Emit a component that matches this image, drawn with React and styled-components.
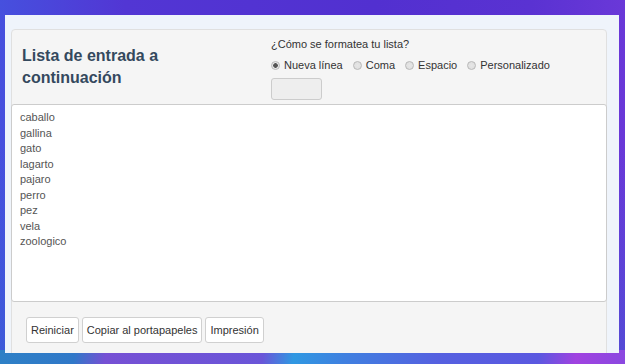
import React from "react";
import styled, { createGlobalStyle } from "styled-components";

const Global = createGlobalStyle`
  html, body { margin: 0; padding: 0; }
  body {
    width: 625px;
    height: 364px;
    overflow: hidden;
    font-family: "Liberation Sans", Arial, sans-serif;
    background:
      linear-gradient(100deg, #2e80c6 0%, #3078c8 12%, #7650d4 17%, #6a55d8 42%, #2f98e2 47%, #3f80e0 55%, #5560e0 70%, #5a58e0 86%, #a042e0 92%, #8a48e0 100%) bottom / 100% 14px no-repeat,
      linear-gradient(180deg, rgba(0,0,0,0) 40%, rgba(40,110,210,0.35) 100%),
      linear-gradient(90deg, #4650de 0%, #5236d4 20%, #5230d0 60%, #5a32d2 85%, #6a38d8 100%);
  }
`;

const Panel = styled.div`
  margin: 15px 0 0 5px;
  width: 614px;
  height: 338px;
  box-sizing: border-box;
  background: #eff4fb;
  padding: 14px 12px 0 6px;
  overflow: hidden;
`;

const Card = styled.div`
  background: #f5f5f5;
  border: 1px solid #e0e0e0;
  border-radius: 4px;
  height: 340px;
  box-sizing: border-box;
  display: flex;
  flex-direction: column;
`;

const Header = styled.div`
  display: flex;
  height: 74px;
  box-sizing: border-box;
  padding: 0 0 0 10px;
`;

const Title = styled.h2`
  margin: 0;
  width: 249px;
  flex: none;
  box-sizing: border-box;
  padding: 15px 40px 0 0;
  font-size: 16px;
  line-height: 22px;
  font-weight: bold;
  color: #34495e;
`;

const Options = styled.div`
  display: flex;
  flex-direction: column;
  padding-top: 7px;
  font-size: 11px;
  color: #333;
`;

const Question = styled.div`
  line-height: 14px;
`;

const RadioRow = styled.div`
  display: flex;
  align-items: center;
  margin-top: 7px;
  height: 14px;
`;

const RadioLabel = styled.label`
  display: flex;
  align-items: center;
  margin-right: 10px;
  color: #333;
`;

const Radio = styled.span`
  width: 9px;
  height: 9px;
  border-radius: 50%;
  box-sizing: border-box;
  border: 1px solid #b8b8b8;
  background: radial-gradient(circle, ${(p) => (p.$checked ? "#555 0, #555 2px, #e8e8e8 2.6px" : "#e6e6e6 0, #dcdcdc 100%")});
  margin-right: 4px;
`;

const CustomBox = styled.div`
  margin-top: 6px;
  width: 51px;
  height: 22px;
  box-sizing: border-box;
  background: #eeeeee;
  border: 1px solid #cccccc;
  border-radius: 3px;
`;

const ListArea = styled.textarea`
  display: block;
  margin: 0 0 0 -1px;
  width: calc(100% + 2px);
  height: 198px;
  box-sizing: border-box;
  resize: none;
  border: 1px solid #cccccc;
  border-radius: 3px;
  background: #fff;
  padding: 5px 8px;
  font-family: "Liberation Sans", Arial, sans-serif;
  font-size: 11px;
  line-height: 15.5px;
  color: #555;
  outline: none;
  overflow: hidden;
`;

const Footer = styled.div`
  display: flex;
  gap: 3px;
  padding: 15px 0 0 14px;
`;

const Button = styled.button`
  height: 26px;
  padding: 0 4px;
  background: #fff;
  border: 1px solid #d0d0d0;
  border-radius: 3px;
  font-family: "Liberation Sans", Arial, sans-serif;
  font-size: 11px;
  color: #333;
`;

const items = ["caballo", "gallina", "gato", "lagarto", "pajaro", "perro", "pez", "vela", "zoologico"];

export default function App() {
  return (
    <>
      <Global />
      <Panel>
        <Card>
          <Header>
            <Title>Lista de entrada a continuación</Title>
            <Options>
              <Question>¿Cómo se formatea tu lista?</Question>
              <RadioRow>
                <RadioLabel><Radio $checked />Nueva línea</RadioLabel>
                <RadioLabel><Radio />Coma</RadioLabel>
                <RadioLabel><Radio />Espacio</RadioLabel>
                <RadioLabel><Radio />Personalizado</RadioLabel>
              </RadioRow>
              <CustomBox />
            </Options>
          </Header>
          <ListArea readOnly value={items.join("\n")} />
          <Footer>
            <Button>Reiniciar</Button>
            <Button>Copiar al portapapeles</Button>
            <Button>Impresión</Button>
          </Footer>
        </Card>
      </Panel>
    </>
  );
}
